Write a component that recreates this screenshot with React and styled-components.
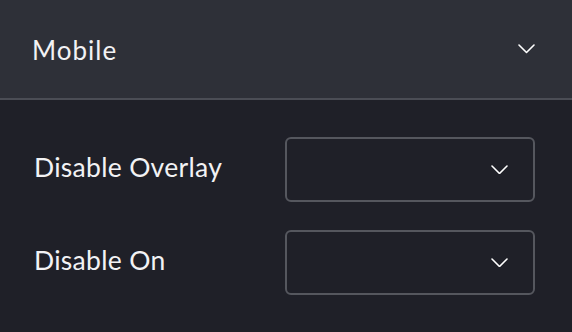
import React from "react";
import styled, { createGlobalStyle } from "styled-components";

const GlobalStyle = createGlobalStyle`
  html, body {
    margin: 0;
    padding: 0;
    background: #1f2028;
  }
  body {
    font-family: Lato, "Noto Sans", sans-serif;
  }
`;

const Panel = styled.div`
  width: 572px;
  height: 332px;
  background: #1f2028;
  overflow: hidden;
`;

const Header = styled.div`
  height: 98px;
  display: flex;
  align-items: center;
  justify-content: space-between;
  padding: 0 37px 0 32px;
  background: #2e3038;
  border-bottom: 2px solid #4b4d55;
  color: #f2f2f4;
  box-sizing: content-box;
`;

const Title = styled.span`
  font-size: 26px;
  letter-spacing: 1px;
  font-weight: 400;
  padding-top: 1px;
`;

const Body = styled.div`
  display: flex;
  flex-direction: column;
  gap: 28px;
  padding: 37px 37px 0 34px;
`;

const Row = styled.div`
  display: flex;
  align-items: center;
  justify-content: space-between;
`;

const Label = styled.span`
  color: #f2f2f4;
  font-size: 26.5px;
  letter-spacing: 0.3px;
  padding-bottom: 5px;
`;

const Select = styled.div`
  width: 250px;
  height: 65px;
  box-sizing: border-box;
  border: 2px solid #55575e;
  border-radius: 6px;
  display: flex;
  align-items: center;
  justify-content: flex-end;
  padding-right: 25px;
`;

const Chevron = ({ size = 17 }) => (
  <svg width={size} height={size / 2 + 1} viewBox="0 0 17 9.5" fill="none">
    <path d="M1 1 L8.5 8.5 L16 1" stroke="#ffffff" strokeWidth="1.6" strokeLinecap="round" strokeLinejoin="round" />
  </svg>
);

export default function App() {
  return (
    <Panel>
      <GlobalStyle />
      <Header>
        <Title>Mobile</Title>
        <Chevron />
      </Header>
      <Body>
        {["Disable Overlay", "Disable On"].map((label) => (
          <Row key={label}>
            <Label>{label}</Label>
            <Select>
              <Chevron />
            </Select>
          </Row>
        ))}
      </Body>
    </Panel>
  );
}
